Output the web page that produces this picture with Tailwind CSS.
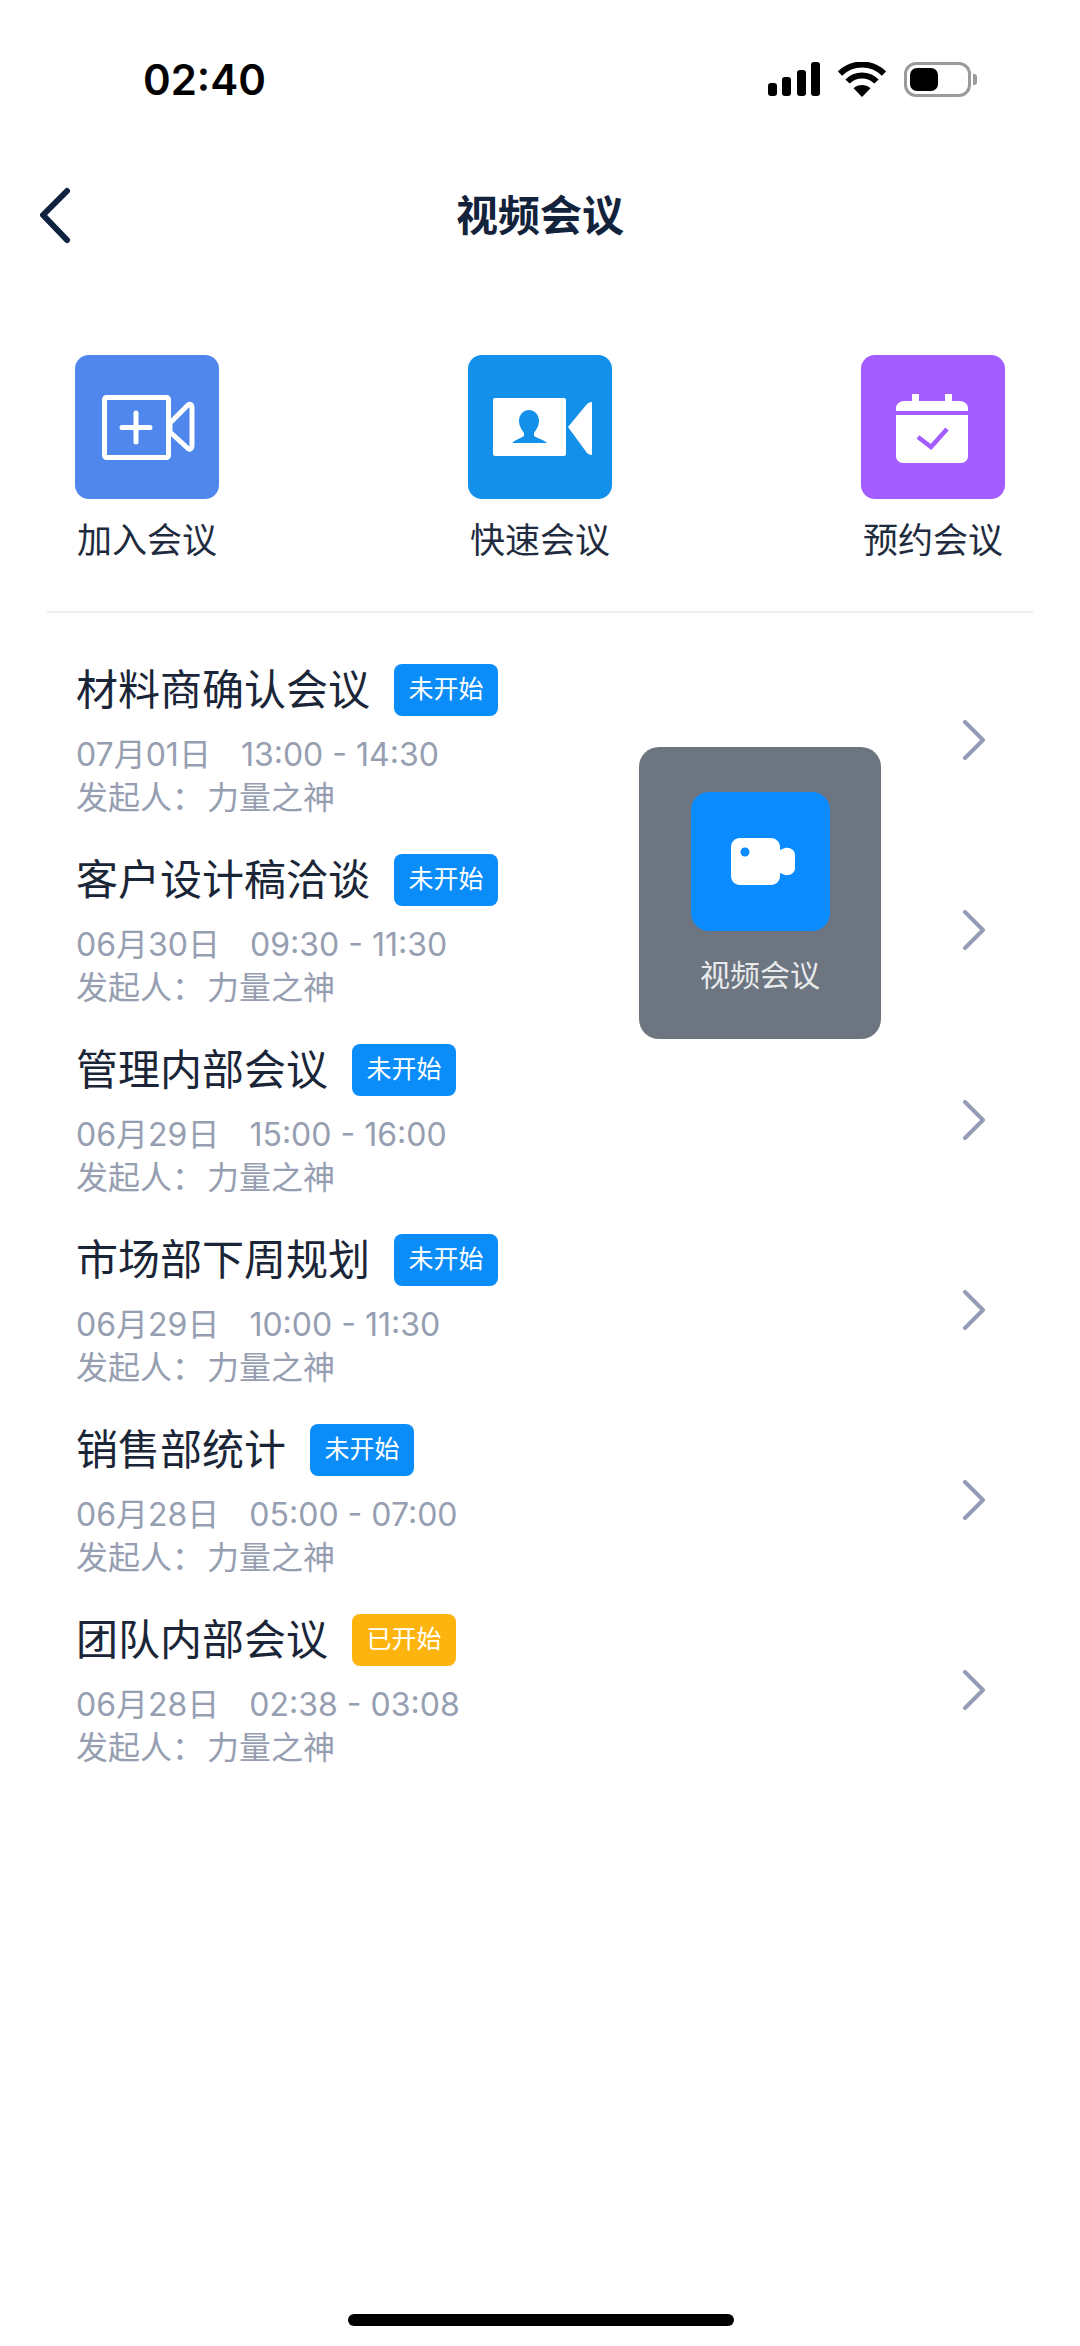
<!DOCTYPE html>
<html lang="zh-CN">
<head>
<meta charset="utf-8">
<script src="https://cdn.jsdelivr.net/npm/@tailwindcss/browser@4"></script>
<title>视频会议</title>
</head>
<body class="bg-white font-['Liberation_Sans','Noto_Sans_CJK_SC',sans-serif]">
<div class="relative w-[1080px] h-[2346px] overflow-hidden bg-white">

  <!-- status bar -->
  <div class="flex items-center justify-between h-[158px] pl-[143px] pr-[109px]">
    <span class="font-['Inter',sans-serif] text-[42px] font-semibold text-black">02:40</span>
    <div class="flex items-center">
      <div class="flex items-end gap-[5.5px] h-[34px]">
        <div class="w-[9px] h-[13px] rounded-[3px] bg-black"></div>
        <div class="w-[9px] h-[19px] rounded-[3px] bg-black"></div>
        <div class="w-[9px] h-[26px] rounded-[3px] bg-black"></div>
        <div class="w-[9px] h-[34px] rounded-[3px] bg-black"></div>
      </div>
      <svg class="ml-[18px]" width="48" height="35" viewBox="0 0 48 35" fill="none">
        <path d="M2 11.5C14.5 -0.5 33.5 -0.5 46 11.5" stroke="#000" stroke-width="6"/>
        <path d="M9.5 19.5C17.5 11.5 30.5 11.5 38.500 19.5" stroke="#000" stroke-width="6"/>
        <path d="M15.500 26.200C20.500 21.800 27.500 21.800 32.500 26.200L24 35Z" fill="#000"/>
      </svg>
      <div class="relative ml-[18px] w-[67px] h-[35px] rounded-[12px] border-[3px] border-[#9b9b9b] p-[3px]">
        <div class="w-[28px] h-full rounded-[7px] bg-black"></div>
        <div class="absolute right-[-9px] top-[9px] w-[4px] h-[11px] rounded-r-[3px] bg-[#9b9b9b]"></div>
      </div>
    </div>
  </div>

  <!-- header -->
  <div class="relative flex items-center justify-center h-[116px] pt-[2px]">
    <svg class="absolute left-[36px] top-[29px]" width="40" height="60" viewBox="0 0 40 60" fill="none">
      <path d="M31 4L7 28L31 53" stroke="#0f2340" stroke-width="6" stroke-linecap="round" stroke-linejoin="round"/>
    </svg>
    <h1 class="text-[42px] font-bold text-[#14233c] leading-none">视频会议</h1>
  </div>

  <!-- actions -->
  <div class="flex justify-between pt-[81px] pb-[50px] pl-[75px] pr-[75px]">
    <div class="flex flex-col items-center w-[144px]">
      <div class="flex items-center justify-center w-[144px] h-[144px] rounded-[14px] bg-[#4f87ec]">
        <svg width="144" height="144" viewBox="0 0 144 144" fill="none">
          <rect x="29.500" y="42.500" width="64" height="60" rx="2" stroke="#fff" stroke-width="5"/>
          <path d="M61 58V87M47 72.500H75" stroke="#fff" stroke-width="5" stroke-linecap="round"/>
          <path d="M95 68L113 50C115 48.500 117 49.500 117 52V91C117 94 115 95 113 93.500L95 77Z" stroke="#fff" stroke-width="5" stroke-linejoin="round"/>
        </svg>
      </div>
      <span class="mt-[22px] text-[35px] leading-[40px] text-[#1f2c40] whitespace-nowrap">加入会议</span>
    </div>
    <div class="flex flex-col items-center w-[144px]">
      <div class="flex items-center justify-center w-[144px] h-[144px] rounded-[14px] bg-[#1290ea]">
        <svg width="144" height="144" viewBox="0 0 144 144" fill="none">
          <rect x="25" y="43" width="73" height="58" rx="2" fill="#fff"/>
          <path d="M61 55C55 55 51 60 51 66C51 71 54 75 56 78V81C51 84 47 85 44 88H79C76 85 71 84 66 81V78C68 75 71 71 71 66C71 60 67 55 61 55Z" fill="#1290ea"/>
          <path d="M100 72L119 49Q121 47 124 47V100Q121 100 119 98Z" fill="#fff"/>
        </svg>
      </div>
      <span class="mt-[22px] text-[35px] leading-[40px] text-[#1f2c40] whitespace-nowrap">快速会议</span>
    </div>
    <div class="flex flex-col items-center w-[144px]">
      <div class="flex items-center justify-center w-[144px] h-[144px] rounded-[14px] bg-[#a25cff]">
        <svg width="144" height="144" viewBox="0 0 144 144" fill="none">
          <path d="M51 39H58V46H84V39H91V46H99C103 46 107 49 107 53V56H35V53C35 49 39 46 43 46H51Z" fill="#fff"/>
          <path d="M35 60H107V101C107 105 104 108 100 108H42C38 108 35 105 35 101Z" fill="#fff"/>
          <path d="M57 82L70 92L86 74" stroke="#a25cff" stroke-width="4.500"/>
        </svg>
      </div>
      <span class="mt-[22px] text-[35px] leading-[40px] text-[#1f2c40] whitespace-nowrap">预约会议</span>
    </div>
  </div>
  <div class="ml-[47px] w-[986px] h-[2px] bg-[#eceef3]"></div>

  <!-- meetings -->
  <div class="pt-[32px] pl-[76px] pr-[94px]">
    <div class="flex justify-between h-[190px]">
      <div class="pt-[19px]">
        <div class="flex items-center gap-[24px] h-[52px]">
          <span class="text-[42px] text-[#1a2638]">材料商确认会议</span>
          <span class="flex items-center justify-center w-[104px] h-[52px] rounded-[8px] bg-[#0a8cf9] text-[25px] text-white">未开始</span>
        </div>
        <p class="mt-[17px] font-['Inter','Noto_Sans_CJK_SC',sans-serif] text-[32px] leading-[43px] text-[#969eb1]">07月01日<span class="ml-[30px]">13:00 - 14:30</span></p>
        <p class="mt-[1px] text-[32px] leading-[43px] text-[#969eb1]">发起人：<span class="ml-[3px]">力量之神</span></p>
      </div>
      <svg class="self-center" width="24" height="40" viewBox="0 0 24 40" fill="none"><path d="M3 2L21 20L3 38" stroke="#949db5" stroke-width="4" stroke-linecap="round" stroke-linejoin="round"/></svg>
    </div>
    <div class="flex justify-between h-[190px]">
      <div class="pt-[19px]">
        <div class="flex items-center gap-[24px] h-[52px]">
          <span class="text-[42px] text-[#1a2638]">客户设计稿洽谈</span>
          <span class="flex items-center justify-center w-[104px] h-[52px] rounded-[8px] bg-[#0a8cf9] text-[25px] text-white">未开始</span>
        </div>
        <p class="mt-[17px] font-['Inter','Noto_Sans_CJK_SC',sans-serif] text-[32px] leading-[43px] text-[#969eb1]">06月30日<span class="ml-[30px]">09:30 - 11:30</span></p>
        <p class="mt-[1px] text-[32px] leading-[43px] text-[#969eb1]">发起人：<span class="ml-[3px]">力量之神</span></p>
      </div>
      <svg class="self-center" width="24" height="40" viewBox="0 0 24 40" fill="none"><path d="M3 2L21 20L3 38" stroke="#949db5" stroke-width="4" stroke-linecap="round" stroke-linejoin="round"/></svg>
    </div>
    <div class="flex justify-between h-[190px]">
      <div class="pt-[19px]">
        <div class="flex items-center gap-[24px] h-[52px]">
          <span class="text-[42px] text-[#1a2638]">管理内部会议</span>
          <span class="flex items-center justify-center w-[104px] h-[52px] rounded-[8px] bg-[#0a8cf9] text-[25px] text-white">未开始</span>
        </div>
        <p class="mt-[17px] font-['Inter','Noto_Sans_CJK_SC',sans-serif] text-[32px] leading-[43px] text-[#969eb1]">06月29日<span class="ml-[30px]">15:00 - 16:00</span></p>
        <p class="mt-[1px] text-[32px] leading-[43px] text-[#969eb1]">发起人：<span class="ml-[3px]">力量之神</span></p>
      </div>
      <svg class="self-center" width="24" height="40" viewBox="0 0 24 40" fill="none"><path d="M3 2L21 20L3 38" stroke="#949db5" stroke-width="4" stroke-linecap="round" stroke-linejoin="round"/></svg>
    </div>
    <div class="flex justify-between h-[190px]">
      <div class="pt-[19px]">
        <div class="flex items-center gap-[24px] h-[52px]">
          <span class="text-[42px] text-[#1a2638]">市场部下周规划</span>
          <span class="flex items-center justify-center w-[104px] h-[52px] rounded-[8px] bg-[#0a8cf9] text-[25px] text-white">未开始</span>
        </div>
        <p class="mt-[17px] font-['Inter','Noto_Sans_CJK_SC',sans-serif] text-[32px] leading-[43px] text-[#969eb1]">06月29日<span class="ml-[30px]">10:00 - 11:30</span></p>
        <p class="mt-[1px] text-[32px] leading-[43px] text-[#969eb1]">发起人：<span class="ml-[3px]">力量之神</span></p>
      </div>
      <svg class="self-center" width="24" height="40" viewBox="0 0 24 40" fill="none"><path d="M3 2L21 20L3 38" stroke="#949db5" stroke-width="4" stroke-linecap="round" stroke-linejoin="round"/></svg>
    </div>
    <div class="flex justify-between h-[190px]">
      <div class="pt-[19px]">
        <div class="flex items-center gap-[24px] h-[52px]">
          <span class="text-[42px] text-[#1a2638]">销售部统计</span>
          <span class="flex items-center justify-center w-[104px] h-[52px] rounded-[8px] bg-[#0a8cf9] text-[25px] text-white">未开始</span>
        </div>
        <p class="mt-[17px] font-['Inter','Noto_Sans_CJK_SC',sans-serif] text-[32px] leading-[43px] text-[#969eb1]">06月28日<span class="ml-[30px]">05:00 - 07:00</span></p>
        <p class="mt-[1px] text-[32px] leading-[43px] text-[#969eb1]">发起人：<span class="ml-[3px]">力量之神</span></p>
      </div>
      <svg class="self-center" width="24" height="40" viewBox="0 0 24 40" fill="none"><path d="M3 2L21 20L3 38" stroke="#949db5" stroke-width="4" stroke-linecap="round" stroke-linejoin="round"/></svg>
    </div>
    <div class="flex justify-between h-[190px]">
      <div class="pt-[19px]">
        <div class="flex items-center gap-[24px] h-[52px]">
          <span class="text-[42px] text-[#1a2638]">团队内部会议</span>
          <span class="flex items-center justify-center w-[104px] h-[52px] rounded-[8px] bg-[#fdb40f] text-[25px] text-white">已开始</span>
        </div>
        <p class="mt-[17px] font-['Inter','Noto_Sans_CJK_SC',sans-serif] text-[32px] leading-[43px] text-[#969eb1]">06月28日<span class="ml-[30px]">02:38 - 03:08</span></p>
        <p class="mt-[1px] text-[32px] leading-[43px] text-[#969eb1]">发起人：<span class="ml-[3px]">力量之神</span></p>
      </div>
      <svg class="self-center" width="24" height="40" viewBox="0 0 24 40" fill="none"><path d="M3 2L21 20L3 38" stroke="#949db5" stroke-width="4" stroke-linecap="round" stroke-linejoin="round"/></svg>
    </div>
  </div>

  <!-- toast -->
  <div class="absolute left-[639px] top-[747px] flex flex-col items-center w-[242px] h-[292px] rounded-[20px] bg-[#6c7580]">
    <div class="flex items-center justify-center mt-[45px] w-[139px] h-[139px] rounded-[18px] bg-[#0a8bff]">
      <svg class="ml-[6px]" width="64" height="47" viewBox="0 0 64 47" fill="none">
        <path d="M9 0H40C45 0 49 4 49 9V12L54 10C59 9 64 12 64 17V30C64 35 59 38 54 37L49 35V38C49 43 45 47 40 47H9C4 47 0 43 0 38V9C0 4 4 0 9 0Z" fill="#fff"/>
        <circle cx="14" cy="14" r="4.500" fill="#0a8bff"/>
      </svg>
    </div>
    <span class="mt-[27px] text-[30px] leading-[36px] text-[#e8eaec]">视频会议</span>
  </div>

  <!-- home indicator -->
  <div class="absolute left-[348px] top-[2314px] w-[386px] h-[12px] rounded-full bg-black"></div>
</div>
</body>
</html>
